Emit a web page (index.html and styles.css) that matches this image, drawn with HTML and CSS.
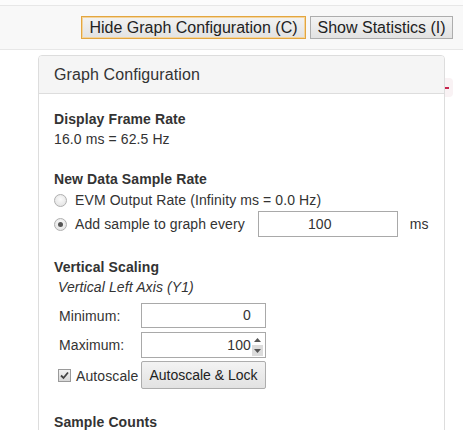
FILE: index.html
```html
<!DOCTYPE html>
<html>
<head>
<meta charset="utf-8">
<link rel="stylesheet" href="styles.css">
</head>
<body>
<div class="topstrip"></div>
<div class="navbar">
  <button class="btn btn-focus">Hide Graph Configuration (C)</button>
  <button class="btn">Show Statistics (I)</button>
</div>
<div class="peek"><span class="peek-dash"></span></div>
<div class="panel">
  <div class="panel-heading">Graph Configuration</div>
  <div class="panel-body">
    <div class="sec">
      <div class="sec-title">Display Frame Rate</div>
      <div>16.0 ms = 62.5 Hz</div>
    </div>
    <div class="sec">
      <div class="sec-title">New Data Sample Rate</div>
      <div class="radio-row r1"><span class="radio"></span>EVM Output Rate (Infinity ms = 0.0 Hz)</div>
      <div class="radio-row r2"><span class="radio checked"></span>Add sample to graph every<span class="field rate">100</span><span class="unit">ms</span></div>
    </div>
    <div class="sec sec-vs">
      <div class="sec-title">Vertical Scaling</div>
      <div class="axis">Vertical Left Axis (Y1)</div>
      <div class="grid">
        <div class="lbl row1">Minimum:</div>
        <div class="field num row1">0</div>
        <div class="lbl row2">Maximum:</div>
        <div class="field num spin row2"><span class="val">100</span><span class="spinner"><span class="up"><svg width="7" height="4" viewBox="0 0 7 4"><path d="M0 4 L3.5 0 L7 4 Z" fill="#555"/></svg></span><span class="down"><svg width="7" height="4" viewBox="0 0 7 4"><path d="M0 0 L3.5 4 L7 0 Z" fill="#555"/></svg></span></span></div>
        <div class="lbl row3"><span class="check"><svg width="9" height="9" viewBox="0 0 9 9"><path d="M1 4.5 L3.5 7 L8 1.5" fill="none" stroke="#444" stroke-width="1.8"/></svg></span>Autoscale</div>
        <button class="btn btn-small row3">Autoscale &amp; Lock</button>
      </div>
    </div>
    <div class="sec-title">Sample Counts</div>
  </div>
</div>
</body>
</html>
```
FILE: styles.css
```css
html, body {
  margin: 0;
  padding: 0;
  background: #fff;
}
body {
  font-family: "Liberation Sans", Arial, sans-serif;
  font-size: 14px;
  line-height: 20px;
  color: #333;
  letter-spacing: 0.1px;
  position: relative;
  height: 430px;
  overflow: hidden;
}
.topstrip {
  height: 5px;
  background: #fcfcfc;
}
.navbar {
  background: #f8f8f8;
  border-top: 1px solid #e7e7e7;
  border-bottom: 1px solid #e7e7e7;
  display: flex;
  justify-content: flex-end;
  align-items: flex-start;
  gap: 4px;
  padding: 10px 10px 0 0;
  box-sizing: border-box;
  height: 45px;
}
.btn {
  font-family: "Liberation Sans", Arial, sans-serif;
  font-size: 16px;
  letter-spacing: 0;
  white-space: nowrap;
  color: #222;
  height: 23px;
  padding: 0;
  border: 1px solid #adadad;
  border-radius: 0;
  background: linear-gradient(#f3f3f3, #e2e2e2);
  line-height: 20px;
  margin: 0;
  box-sizing: border-box;
}
.navbar .btn:first-child { width: 225px; }
.navbar .btn:last-child { width: 143px; }
.btn-focus {
  border-color: #e3a640;
  box-shadow: inset 0 0 0 1px #f4d49c;
}
.peek {
  position: absolute;
  left: 445px;
  top: 78px;
  width: 8px;
  height: 19px;
  background: #f9f2f4;
  border-radius: 0 4px 4px 0;
}
.peek-dash {
  position: absolute;
  left: 0;
  top: 9px;
  width: 4px;
  height: 2px;
  background: #c7254e;
}
.panel {
  margin: 5px 18px 0 38px;
  border: 1px solid #ddd;
  border-radius: 4px;
  background: #fff;
}
.panel-heading {
  height: 37px;
  line-height: 37px;
  padding: 0 15px;
  font-size: 16px;
  background: #f5f5f5;
  border-bottom: 1px solid #ddd;
  border-radius: 3px 3px 0 0;
}
.panel-body {
  padding: 15px;
}
.sec {
  margin-bottom: 20px;
}
.sec-title {
  font-weight: bold;
}
.radio-row {
  display: flex;
  align-items: center;
}
.r1 { height: 22px; }
.r2 { height: 26px; }
.radio {
  width: 11px;
  height: 11px;
  border: 1px solid #b0b0b0;
  border-radius: 50%;
  background: radial-gradient(circle at 50% 40%, #fbfbfb, #dedede);
  margin-right: 8px;
  position: relative;
  flex: none;
}
.radio.checked::after {
  content: "";
  position: absolute;
  left: 3px;
  top: 3px;
  width: 5px;
  height: 5px;
  border-radius: 50%;
  background: #555;
}
.field {
  border: 1px solid #a9a9a9;
  box-sizing: border-box;
  background: #fff;
  font-size: 14px;
}
.rate {
  width: 140px;
  height: 26px;
  line-height: 24px;
  text-align: center;
  padding-right: 16px;
  margin-left: 13px;
}
.unit {
  margin-left: 12px;
}
.sec-vs {
  margin-bottom: 22px;
}
.axis {
  font-style: italic;
  padding-left: 4px;
  margin-bottom: 6px;
}
.grid {
  display: grid;
  grid-template-columns: 87px 125px;
  grid-template-rows: 25px 26px 28px;
  row-gap: 4px;
}
.grid .row3 { margin-top: -1px; }
.lbl {
  display: flex;
  align-items: center;
  padding-left: 5px;
}
.num {
  text-align: right;
  padding-right: 14px;
  line-height: 23px;
}
.spin {
  display: flex;
  justify-content: flex-end;
  align-items: center;
  padding-right: 2px;
}
.spin .val {
  margin-right: 1px;
}
.spinner {
  display: flex;
  flex-direction: column;
  width: 11px;
  height: 22px;
}
.spinner .up, .spinner .down {
  flex: 1;
  display: flex;
  align-items: center;
  justify-content: center;
}
.spinner .down {
  background: #dcdcdc;
}
.check {
  width: 11px;
  height: 11px;
  border: 1px solid #9a9a9a;
  background: linear-gradient(#f2f2f2, #d8d8d8);
  margin-right: 5px;
  display: flex;
  align-items: center;
  justify-content: center;
  flex: none;
  margin-left: -1px;
}
.btn-small {
  font-size: 14px;
  height: 28px;
  width: 125px;
  padding: 0;
  border-radius: 2px;
}
```
